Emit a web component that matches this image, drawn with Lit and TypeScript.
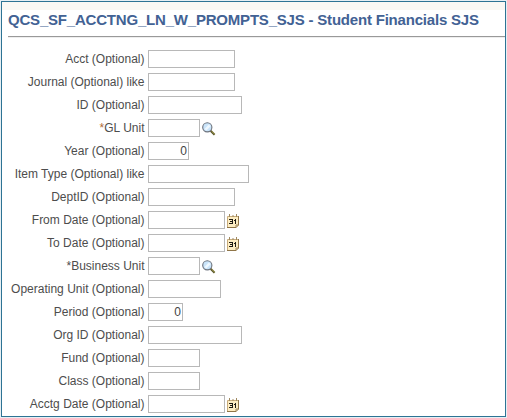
import { LitElement, html, css, svg, nothing } from "lit";
import { customElement } from "lit/decorators.js";

type Field = {
  label: string;
  width: number;
  value?: string;
  icon?: "lookup" | "calendar";
  required?: "plain" | "accent";
};

const FIELDS: Field[] = [
  { label: "Acct (Optional)", width: 87 },
  { label: "Journal (Optional) like", width: 87 },
  { label: "ID (Optional)", width: 94 },
  { label: "GL Unit", width: 52, icon: "lookup", required: "accent" },
  { label: "Year (Optional)", width: 41, value: "0" },
  { label: "Item Type (Optional) like", width: 101 },
  { label: "DeptID (Optional)", width: 87 },
  { label: "From Date (Optional)", width: 77, icon: "calendar" },
  { label: "To Date (Optional)", width: 77, icon: "calendar" },
  { label: "Business Unit", width: 52, icon: "lookup", required: "plain" },
  { label: "Operating Unit (Optional)", width: 73 },
  { label: "Period (Optional)", width: 35, value: "0" },
  { label: "Org ID (Optional)", width: 94 },
  { label: "Fund (Optional)", width: 52 },
  { label: "Class (Optional)", width: 52 },
  { label: "Acctg Date (Optional)", width: 77, icon: "calendar" },
];

const lookupIcon = svg`
  <path d="M8.6 8.8 L12.6 12.8" stroke="#56532a" stroke-width="2.1"/>
  <path d="M9.6 9.2 L12.8 12.2" stroke="#b9b158" stroke-width=".9"/>
  <circle cx="5.3" cy="5.3" r="4.6" fill="#c9e4fa" stroke="#6c727c" stroke-width="1.1"/>
  <path d="M2.4 7 L6.8 2.4 L8.6 4.2 L4.4 8.6Z" fill="#eef8ff"/>`;

const calendarIcon = svg`
  <path d="M0.5 2.5 H11.5 V11 L9 13.5 H0.5Z" fill="#fdedc2" stroke="#c9ad7c"/>
  <path d="M11.5 2 V11 M9 13.5 H0" fill="none" stroke="#8f7548"/>
  <path d="M9 13.5 V11 H11.5Z" fill="#fff8dc" stroke="#8f7548" stroke-width=".8"/>
  <path d="M2.5 0 V3 M6 1 V3 M9.5 0 V3" stroke="#a08a62"/>
  <path d="M2 5.5 H5 M3 7.5 H5 M2 9.5 H5 M5.5 5 V10 M8.5 5 V10 M7 6.5 H9" stroke="#1d1a14" fill="none"/>`;

@customElement("app-root")
export class AppRoot extends LitElement {
  static styles = css`
    :host {
      display: block;
      box-sizing: border-box;
      height: 418px;
      padding: 1px;
      background: #e6eff4;
      overflow: hidden;
      font-family: "Liberation Sans", Arial, sans-serif;
    }
    .panel {
      box-sizing: border-box;
      height: 416px;
      border: 1px solid #2e7394;
      background: #fff;
    }
    .strip {
      height: 8px;
      background: #faf8f4;
    }
    .title {
      box-sizing: border-box;
      height: 26px;
      margin: 0 0 0 6px;
      padding-top: 1px;
      font-size: 15px;
      line-height: 18px;
      font-weight: bold;
      letter-spacing: -0.2px;
      color: #426294;
      white-space: nowrap;
    }
    .rule {
      height: 1px;
      margin-left: 6px;
      background: #999;
      border-bottom: 1px solid #eee;
    }
    .fields {
      display: grid;
      grid-auto-rows: 18px;
      row-gap: 5px;
      padding-top: 12px;
    }
    .field {
      display: flex;
    }
    .label {
      width: 142.5px;
      margin-right: 3.5px;
      text-align: right;
      white-space: nowrap;
      font-size: 12px;
      line-height: 18px;
      color: #4d4d4d;
    }
    .accent {
      color: #b06a35;
    }
    .input {
      box-sizing: border-box;
      height: 18px;
      margin: 0;
      padding: 0 1px;
      border: 1px solid #b8b8b8;
      border-radius: 0;
      background: #fff;
      font: 12px "Liberation Sans", Arial, sans-serif;
      color: #444;
      text-align: right;
      outline: none;
    }
    .icon {
      flex: none;
      display: block;
      margin: 3px 0 0 2px;
    }
  `;

  private renderField(f: Field) {
    const glyph = f.icon === "lookup" ? lookupIcon : calendarIcon;
    return html`<div class="field">
      <label class="label">${f.required ? html`<span class=${f.required}>*</span>` : nothing}${f.label}</label>
      <input class="input" aria-label=${f.label} style="width:${f.width}px" .value=${f.value ?? ""} />
      ${f.icon ? html`<svg class="icon" width="14" height="14" viewBox="0 0 14 14">${glyph}</svg>` : nothing}
    </div>`;
  }

  render() {
    return html`<div class="panel">
      <div class="strip"></div>
      <h1 class="title">QCS_SF_ACCTNG_LN_W_PROMPTS_SJS - Student Financials SJS</h1>
      <div class="rule"></div>
      <div class="fields">${FIELDS.map((f) => this.renderField(f))}</div>
    </div>`;
  }
}
